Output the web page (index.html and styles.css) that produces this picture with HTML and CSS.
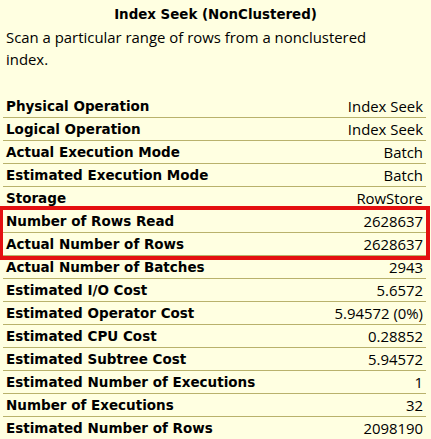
FILE: index.html
```html
<!DOCTYPE html>
<html>
<head>
<meta charset="utf-8">
<link rel="stylesheet" href="styles.css">
</head>
<body>
<div class="tip">
  <div class="title">Index Seek (NonClustered)</div>
  <div class="desc">Scan a particular range of rows from a nonclustered index.</div>
  <div class="props">
    <div class="row"><span class="k">Physical Operation</span><span class="v">Index Seek</span></div>
    <div class="row"><span class="k">Logical Operation</span><span class="v">Index Seek</span></div>
    <div class="row"><span class="k">Actual Execution Mode</span><span class="v">Batch</span></div>
    <div class="row"><span class="k">Estimated Execution Mode</span><span class="v">Batch</span></div>
    <div class="row"><span class="k">Storage</span><span class="v">RowStore</span></div>
    <div class="mark">
      <div class="row"><span class="k">Number of Rows Read</span><span class="v">2628637</span></div>
      <div class="row"><span class="k">Actual Number of Rows</span><span class="v">2628637</span></div>
    </div>
    <div class="row"><span class="k">Actual Number of Batches</span><span class="v">2943</span></div>
    <div class="row"><span class="k">Estimated I/O Cost</span><span class="v">5.6572</span></div>
    <div class="row"><span class="k">Estimated Operator Cost</span><span class="v">5.94572 (0%)</span></div>
    <div class="row"><span class="k">Estimated CPU Cost</span><span class="v">0.28852</span></div>
    <div class="row"><span class="k">Estimated Subtree Cost</span><span class="v">5.94572</span></div>
    <div class="row"><span class="k">Estimated Number of Executions</span><span class="v">1</span></div>
    <div class="row"><span class="k">Number of Executions</span><span class="v">32</span></div>
    <div class="row"><span class="k">Estimated Number of Rows</span><span class="v">2098190</span></div>
  </div>
</div>
</body>
</html>
```
FILE: styles.css
```css
html, body {
  margin: 0;
  padding: 0;
  background: #FFFFE1;
}
.tip {
  width: 431px;
  height: 439px;
  overflow: hidden;
  background: #FFFFE1;
  color: #000;
  font-family: "Open Sans", "Liberation Sans", sans-serif;
  font-size: 14.9px;
}
.title {
  font-family: "DejaVu Sans", sans-serif;
  font-weight: bold;
  font-size: 13.4px;
  text-align: center;
  line-height: 22px;
  padding-top: 4px;
}
.desc {
  padding: 0 6px;
  line-height: 22px;
  width: 375px;
}
.props {
  margin: 25px 5px 0 3px;
}
.row {
  display: flex;
  justify-content: space-between;
  align-items: center;
  height: 22px;
  border-bottom: 1px solid #B9B26C;
  padding: 0 3px 0 3px;
}
.k {
  font-family: "DejaVu Sans", sans-serif;
  font-weight: bold;
  font-size: 13.5px;
}
.mark {
  outline: 4px solid #E41010;
  outline-offset: 0;
  position: relative;
  z-index: 1;
}
```
